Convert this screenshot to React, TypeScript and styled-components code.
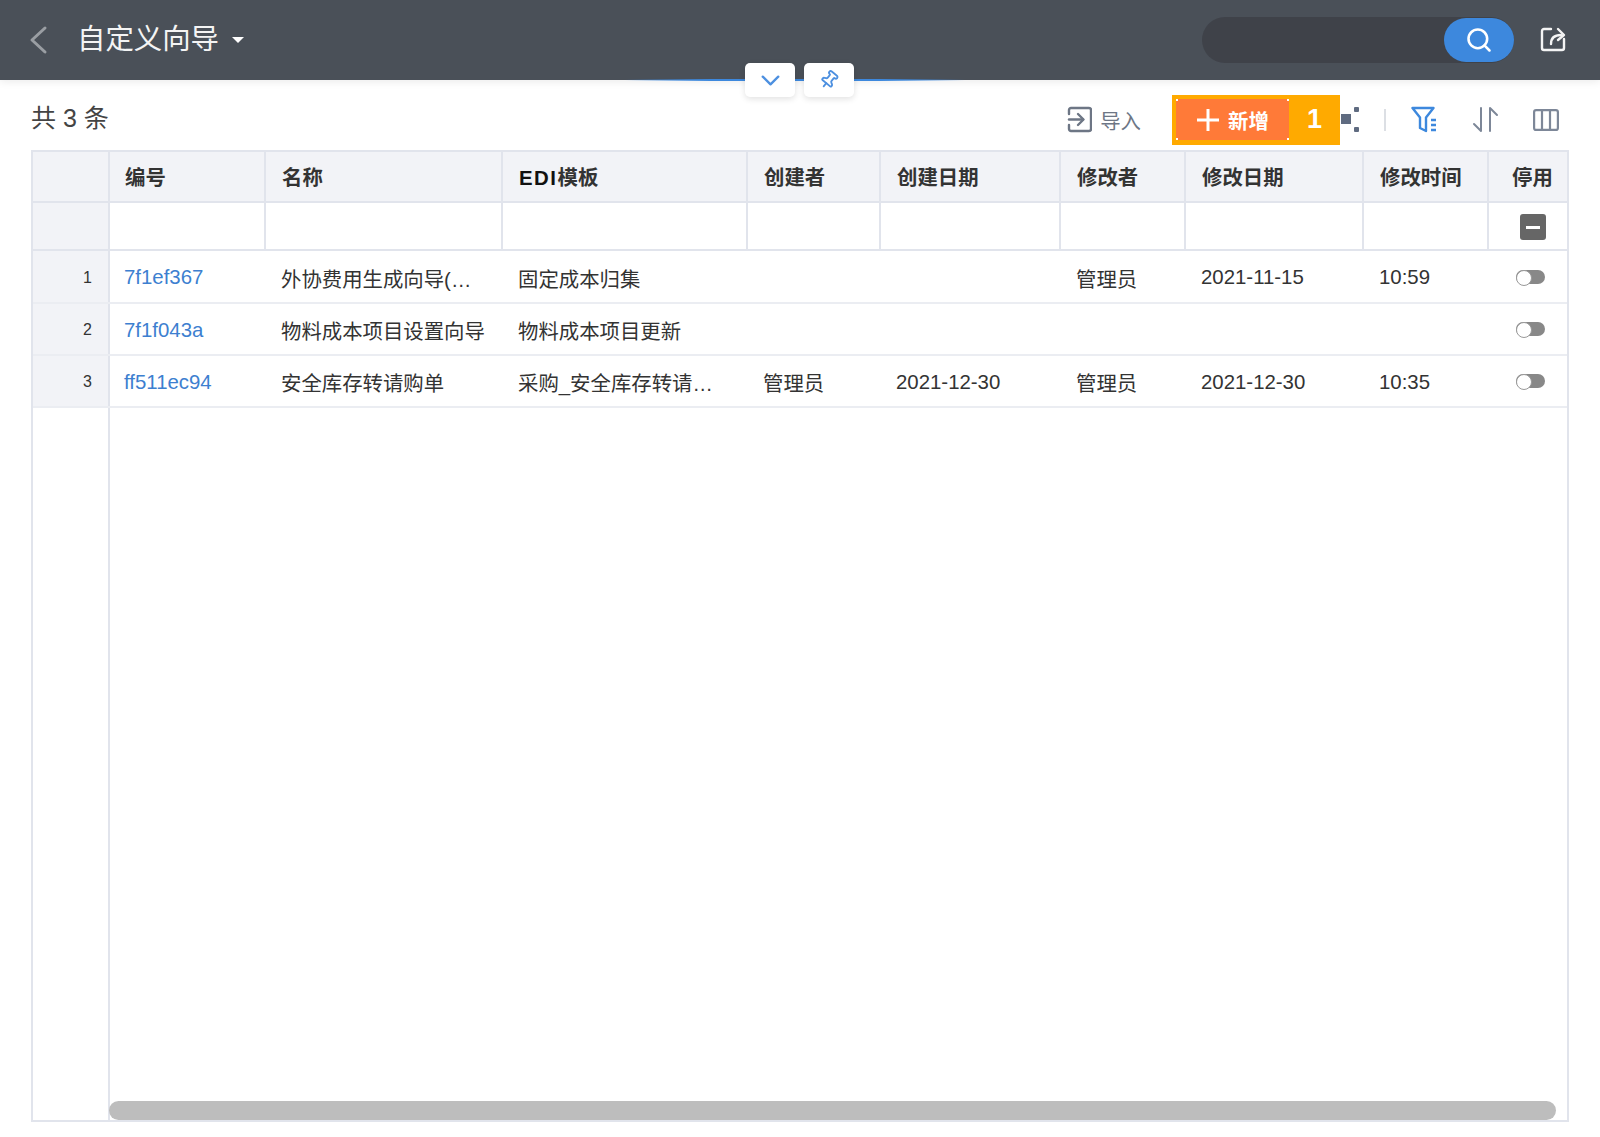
import React from "react";
import styled, { createGlobalStyle } from "styled-components";
import { ChevronDown, Pin, Search } from "lucide-react";

const GlobalStyle = createGlobalStyle`
  html, body {
    margin: 0;
    padding: 0;
    background: #ffffff;
  }
  * {
    box-sizing: border-box;
  }
  body {
    font-family: "Liberation Sans", "Noto Sans CJK SC", sans-serif;
    color: #333333;
  }
`;

const Page = styled.div`
  position: relative;
  display: flex;
  flex-direction: column;
  width: 1600px;
  height: 1137px;
  overflow: hidden;
`;

const Header = styled.header`
  display: flex;
  align-items: center;
  flex-shrink: 0;
  height: 80px;
  padding: 0 33px 0 28px;
  background: #4a5058;
  box-shadow: 0 2px 8px rgba(0, 0, 0, 0.08);
`;

const BackButton = styled.span`
  display: flex;
  width: 50px;
  color: #9a9ea3;
`;

const Title = styled.h1`
  margin: -2px 13px 0 -1px;
  color: #f4f4f4;
  font-size: 28.400px;
  font-weight: 400;
  line-height: 40px;
`;

const Caret = styled.span`
  width: 0;
  height: 0;
  border-top: 6px solid #ffffff;
  border-left: 6px solid transparent;
  border-right: 6px solid transparent;
`;

const SearchBox = styled.div`
  display: flex;
  justify-content: flex-end;
  align-items: center;
  width: 312px;
  height: 46px;
  margin-left: auto;
  background: #3f4249;
  border-radius: 23px;
`;

const SearchButton = styled.button`
  display: flex;
  align-items: center;
  justify-content: center;
  width: 70px;
  height: 44px;
  padding: 0;
  border: none;
  border-radius: 22px;
  background: #3d88dd;
  color: #ffffff;
`;

const ShareButton = styled.span`
  display: flex;
  margin: -2px 0 0 25px;
  color: #f4f4f4;
`;

const PullTabs = styled.div`
  position: absolute;
  top: 63px;
  left: 745px;
  display: flex;
  gap: 9px;
  &::before {
    content: "";
    position: absolute;
    top: 16px;
    left: -120px;
    width: 340px;
    height: 2px;
    background: linear-gradient(90deg, transparent, #3d88dd 25%, #3d88dd 75%, transparent);
  }
`;

const PullTab = styled.button`
  position: relative;
  display: flex;
  align-items: center;
  justify-content: center;
  width: 50px;
  height: 34px;
  padding: 0;
  border: none;
  border-radius: 5px;
  background: #ffffff;
  color: #4d90e0;
  box-shadow: 0 2px 6px rgba(0, 0, 0, 0.12);
`;

const Toolbar = styled.div`
  display: flex;
  align-items: center;
  height: 70px;
  padding: 9px 9px 0 0;
  margin-left: 31px;
  margin-right: 32px;
`;

const Total = styled.span`
  font-size: 25px;
  line-height: 32px;
  color: #444444;
  margin-top: -4px;
`;

const ImportButton = styled.span`
  display: flex;
  align-items: center;
  gap: 8px;
  margin-left: auto;
  color: #6d7685;
  font-size: 20.400px;
`;

const Highlight = styled.div`
  display: flex;
  align-items: center;
  width: 168px;
  height: 50px;
  margin-left: 31px;
  padding-left: 4px;
  background: #ffaa00;
`;

const AddButton = styled.button`
  display: flex;
  align-items: center;
  justify-content: center;
  gap: 8px;
  width: 113px;
  height: 41px;
  padding: 0;
  border: none;
  background:
    linear-gradient(#ff7a38, #ff7a38) center / 100% calc(100% - 4px) no-repeat,
    linear-gradient(#ff7a38, #ff7a38) center / calc(100% - 4px) 100% no-repeat,
    #ffffff;
  color: #ffffff;
  font-family: inherit;
  font-size: 20.400px;
  font-weight: 700;
`;

const BadgeNumber = styled.span`
  flex: 1;
  color: #ffffff;
  font-size: 27px;
  font-weight: 700;
  text-align: center;
`;

const ToolIcon = styled.span<{ $gap: number; $blue?: boolean }>`
  display: flex;
  margin-left: ${(p) => p.$gap}px;
  color: ${(p) => (p.$blue ? "#3d88dd" : "#7d8798")};
`;

const Divider = styled.span`
  width: 2px;
  height: 22px;
  margin-left: 24px;
  background: #dcdfe4;
`;

const Frame = styled.div`
  position: relative;
  display: flex;
  flex-direction: column;
  height: 972px;
  margin: 0 31px;
  border: 2px solid #e1e4ec;
`;

const Table = styled.table`
  width: 100%;
  table-layout: fixed;
  border-collapse: collapse;
  flex-shrink: 0;
`;

const HeadCell = styled.th`
  height: 50px;
  padding: 0 16px 2px;
  border-right: 2px solid #e1e4ec;
  border-bottom: 2px solid #e1e4ec;
  background: #f2f3f7;
  color: #333333;
  font-size: 20.400px;
  font-weight: 700;
  text-align: left;
  white-space: nowrap;
  &:nth-child(2) {
    padding-left: 15px;
  }
  &:last-child {
    border-right: none;
    padding: 0 0 2px 9px;
    text-align: center;
  }
`;

const HeadLatin = styled.span`
  color: #111111;
  letter-spacing: 1.500px;
`;

const FilterCell = styled.td<{ $gutter?: boolean }>`
  height: 48px;
  padding: 0;
  border-right: 2px solid #e1e4ec;
  border-bottom: 2px solid #e1e4ec;
  background: ${(p) => (p.$gutter ? "#f2f3f7" : "#ffffff")};
  &:last-child {
    border-right: none;
    padding: 2px 0 0 9px;
  }
`;

const DataRow = styled.tr`
  &:first-child > td {
    height: 53px;
  }
`;

const RowNumber = styled.td`
  height: 52px;
  padding: 2px 16px 0 0;
  border-right: 2px solid #e1e4ec;
  border-bottom: 2px solid #ebedf2;
  background: #f2f3f7;
  font-size: 16px;
  text-align: right;
`;

const Cell = styled.td<{ $link?: boolean }>`
  height: 52px;
  padding: 2px 16px 0;
  padding-left: ${(p) => (p.$link ? 14 : 16)}px;
  border-bottom: 2px solid #ebedf2;
  color: ${(p) => (p.$link ? "#3d7fd0" : "#333333")};
  font-size: 20.400px;
  white-space: nowrap;
  overflow: hidden;
`;

const ToggleCell = styled.td`
  padding: 0 0 0 6px;
  border-bottom: 2px solid #ebedf2;
  text-align: center;
`;

const MinusBox = styled.span`
  display: flex;
  align-items: center;
  justify-content: center;
  width: 26px;
  height: 26px;
  margin: 0 auto;
  border-radius: 3px;
  background: #666666;
  &::after {
    content: "";
    width: 14px;
    height: 3px;
    background: #ffffff;
  }
`;

const Toggle = styled.span`
  display: block;
  position: relative;
  width: 29px;
  height: 14px;
  margin: 0 auto;
  border-radius: 7px;
  background: #888888;
  &::after {
    content: "";
    position: absolute;
    top: 0;
    left: 0;
    width: 14px;
    height: 14px;
    border: 1px solid #999999;
    border-radius: 50%;
    background: #ffffff;
  }
`;

const Filler = styled.div`
  flex: 1;
  display: flex;
`;

const FillerGutter = styled.div`
  width: 77px;
  border-right: 2px solid #e1e4ec;
`;

const Scrollbar = styled.div`
  position: absolute;
  left: 76px;
  right: 11px;
  bottom: 0;
  height: 19px;
  border-radius: 10px;
  background: #bdbdbd;
`;

const ShareIcon = () => (
  <svg width="28" height="28" viewBox="0 0 28 28" fill="none" stroke="currentColor" strokeWidth="2.4" strokeLinecap="round" strokeLinejoin="round">
    <path d="M12 4H5a2 2 0 0 0-2 2v17a2 2 0 0 0 2 2h18a2 2 0 0 0 2-2v-9" />
    <path d="M12 19c0-6 3-9 10-9" />
    <path d="M19 4l6 6-6 5" />
  </svg>
);

const ImportIcon = () => (
  <svg width="25" height="27" viewBox="0 0 25 27" fill="none" stroke="currentColor" strokeWidth="2.4" strokeLinecap="round" strokeLinejoin="round">
    <path d="M2 8V4a2 2 0 0 1 2-2h18a2 2 0 0 1 2 2v19a2 2 0 0 1-2 2H4a2 2 0 0 1-2-2v-4" />
    <path d="M2 13.5h14" />
    <path d="M11 8l5.5 5.500L11 19" />
  </svg>
);

const NodesIcon = () => (
  <svg width="19" height="27" viewBox="0 0 19 27" fill="#5f6b80">
    <rect x="0" y="8" width="10" height="10" />
    <rect x="13" y="1" width="5" height="5" rx="1" />
    <rect x="13" y="21" width="5" height="5" rx="1" />
  </svg>
);

const FilterIcon = () => (
  <svg width="28" height="27" viewBox="0 0 28 27" fill="none" stroke="currentColor" strokeWidth="2.4" strokeLinejoin="round">
    <path d="M1.500 2h21l-7.500 9.500V25l-6-3V11.500z" />
    <path d="M20 14h5M20 19h5M20 24h5" />
  </svg>
);

const SortIcon = () => (
  <svg width="28" height="27" viewBox="0 0 28 27" fill="none" stroke="currentColor" strokeWidth="2" strokeLinecap="round" strokeLinejoin="round">
    <path d="M9 2v23L2 18" />
    <path d="M18 25V2l7 7" />
  </svg>
);

const ColumnsIcon = () => (
  <svg width="26" height="22" viewBox="0 0 26 22" fill="none" stroke="currentColor" strokeWidth="2.2" strokeLinejoin="round">
    <rect x="1.100" y="1.100" width="23.800" height="19.800" rx="2" />
    <path d="M9 1v20M17 1v20" />
  </svg>
);

const columns = [
  { key: "index", label: "", width: 76 },
  { key: "code", label: "编号", width: 156 },
  { key: "name", label: "名称", width: 237 },
  { key: "edi", label: "模板", latin: "EDI", width: 245 },
  { key: "creator", label: "创建者", width: 133 },
  { key: "created", label: "创建日期", width: 180 },
  { key: "editor", label: "修改者", width: 125 },
  { key: "edited", label: "修改日期", width: 178 },
  { key: "time", label: "修改时间", width: 125 },
  { key: "off", label: "停用", width: 79 },
];

const rows = [
  ["7f1ef367", "外协费用生成向导(…", "固定成本归集", "", "", "管理员", "2021-11-15", "10:59"],
  ["7f1f043a", "物料成本项目设置向导", "物料成本项目更新", "", "", "", "", ""],
  ["ff511ec94", "安全库存转请购单", "采购_安全库存转请…", "管理员", "2021-12-30", "管理员", "2021-12-30", "10:35"],
];

const App: React.FC = () => {
  return (
    <Page>
      <GlobalStyle />
      <Header>
        <BackButton>
          <svg width="22" height="30" viewBox="0 0 22 30" fill="none" stroke="currentColor" strokeWidth="3" strokeLinecap="round" strokeLinejoin="round">
            <path d="M17 3L4 15l13 12" />
          </svg>
        </BackButton>
        <Title>自定义向导</Title>
        <Caret />
        <SearchBox>
          <SearchButton>
            <Search size={28} strokeWidth={2.2} />
          </SearchButton>
        </SearchBox>
        <ShareButton>
          <ShareIcon />
        </ShareButton>
      </Header>
      <PullTabs>
        <PullTab>
          <ChevronDown size={31} strokeWidth={1.8} />
        </PullTab>
        <PullTab>
          <Pin size={20} strokeWidth={2.2} style={{ transform: "rotate(40deg)" }} />
        </PullTab>
      </PullTabs>
      <Toolbar>
        <Total>共 3 条</Total>
        <ImportButton>
          <ImportIcon />
          导入
        </ImportButton>
        <Highlight>
          <AddButton>
            <svg width="24" height="24" viewBox="0 0 24 24" stroke="currentColor" strokeWidth="3">
              <path d="M12 1v22M1 12h22" />
            </svg>
            新增
          </AddButton>
          <BadgeNumber>1</BadgeNumber>
        </Highlight>
        <ToolIcon $gap={1}>
          <NodesIcon />
        </ToolIcon>
        <Divider />
        <ToolIcon $gap={25} $blue>
          <FilterIcon />
        </ToolIcon>
        <ToolIcon $gap={33}>
          <SortIcon />
        </ToolIcon>
        <ToolIcon $gap={33}>
          <ColumnsIcon />
        </ToolIcon>
      </Toolbar>
      <Frame>
        <Table>
          <colgroup>
            {columns.map((c) => (
              <col key={c.key} style={{ width: c.width }} />
            ))}
          </colgroup>
          <thead>
            <tr>
              {columns.map((c) => (
                <HeadCell key={c.key}>
                  {c.latin && <HeadLatin>{c.latin}</HeadLatin>}
                  {c.label}
                </HeadCell>
              ))}
            </tr>
            <tr>
              {columns.map((c, i) => (
                <FilterCell key={c.key} $gutter={i === 0}>
                  {i === columns.length - 1 && <MinusBox />}
                </FilterCell>
              ))}
            </tr>
          </thead>
          <tbody>
            {rows.map((row, r) => (
              <DataRow key={row[0]}>
                <RowNumber>{r + 1}</RowNumber>
                {row.map((value, i) => (
                  <Cell key={i} $link={i === 0}>
                    {value}
                  </Cell>
                ))}
                <ToggleCell>
                  <Toggle />
                </ToggleCell>
              </DataRow>
            ))}
          </tbody>
        </Table>
        <Filler>
          <FillerGutter />
        </Filler>
        <Scrollbar />
      </Frame>
    </Page>
  );
};

export default App;
